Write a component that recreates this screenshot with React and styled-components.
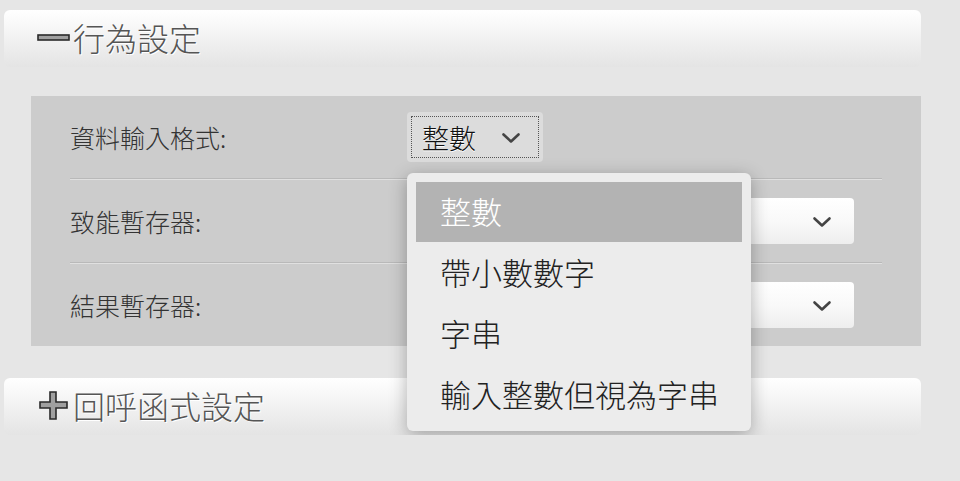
import { useState } from "react";
import styled, { createGlobalStyle } from "styled-components";

const options = ["整數", "帶小數數字", "字串", "輸入整數但視為字串"];

const GlobalStyle = createGlobalStyle`
  html, body {
    margin: 0;
    padding: 0;
    background: #e6e6e6;
    font-family: "Noto Sans CJK TC", "Noto Sans", sans-serif;
    font-weight: 300;
  }
`;

const Chevron = () => (
    <svg width="20" height="12" viewBox="0 0 20 12">
        <path d="M2.5 2.5 L10 9.5 L17.5 2.5" fill="none" stroke="#444" strokeWidth="2.6" strokeLinecap="round" strokeLinejoin="round" />
    </svg>
);

const MinusIcon = () => (
    <svg width="34" height="10" viewBox="0 0 34 10">
        <rect x="1" y="2" width="31" height="5" fill="#a0a0a0" stroke="#2a2a2a" strokeWidth="1.6" />
    </svg>
);

const PlusIcon = () => (
    <svg width="34" height="34" viewBox="0 0 34 34">
        <path d="M13 3 H19 V13 H30 V19 H19 V30 H13 V19 H3 V13 H13 Z" fill="#a0a0a0" stroke="#2a2a2a" strokeWidth="1.6" />
    </svg>
);

const Select = ({ value, width, open, focused, onToggle, onPick }) => (
    <SelectWrap>
        <SelectBox $width={width} $focused={focused} onClick={onToggle}>
            <span>{value}</span>
            <Chevron />
        </SelectBox>
        {open && (
            <Menu>
                {options.map((opt) => (
                    <MenuItem key={opt} $active={opt === value} onClick={() => onPick(opt)}>{opt}</MenuItem>
                ))}
            </Menu>
        )}
    </SelectWrap>
);

const App = () => {
    const [format, setFormat] = useState(options[0]);
    const [open, setOpen] = useState(true);

    return (
        <Page>
            <GlobalStyle />
            <SectionHeader>
                <MinusIcon />
                <span>行為設定</span>
            </SectionHeader>
            <Panel>
                <Row>
                    <Label>資料輸入格式:</Label>
                    <Select value={format} width={136} focused open={open}
                        onToggle={() => setOpen(!open)}
                        onPick={(v) => { setFormat(v); setOpen(false); }} />
                </Row>
                <Divider />
                <Row>
                    <Label>致能暫存器:</Label>
                    <Select value="" width={447} />
                </Row>
                <Divider />
                <Row>
                    <Label>結果暫存器:</Label>
                    <Select value="" width={447} />
                </Row>
            </Panel>
            <SectionHeader $closed>
                <PlusIcon />
                <span>回呼函式設定</span>
            </SectionHeader>
        </Page>
    );
};

export default App;

const Page = styled.div`
    width: 917px;
    padding: 10px 0 0 4px;
    display: flex;
    flex-direction: column;
`;

const SectionHeader = styled.div`
    box-sizing: border-box;
    height: 57px;
    margin-top: ${(p) => (p.$closed ? "32px" : "0")};
    border-radius: 6px;
    background: linear-gradient(to bottom, #ffffff 0%, #f3f3f3 45%, #e4e4e4 100%);
    display: flex;
    align-items: center;
    padding: 0 0 4px 33px;
    gap: 2px;
    font-size: 32px;
    color: #555;
    text-shadow: 1px 1px 0 #fff;

    svg {
        flex-shrink: 0;
        margin-top: 3px;
    }
`;

const Panel = styled.div`
    margin: 29px 0 0 27px;
    background: #cccccc;
    padding: 0 39px;
    display: flex;
    flex-direction: column;
`;

const Row = styled.div`
    height: 82px;
    display: flex;
    align-items: center;
`;

const Divider = styled.div`
    height: 2px;
    border-top: 1px solid #b9b9b9;
    border-bottom: 1px solid #e0e0e0;
    box-sizing: border-box;
`;

const Label = styled.div`
    width: 337px;
    font-size: 25px;
    color: #333;
`;

const SelectWrap = styled.div`
    position: relative;
`;

const SelectBox = styled.div`
    box-sizing: border-box;
    width: ${(p) => p.$width}px;
    height: ${(p) => (p.$focused ? "50px" : "46px")};
    border-radius: 4px;
    background: ${(p) => (p.$focused ? "#dcdcdc" : "linear-gradient(to bottom, #ffffff 0%, #f9f9f9 50%, #eeeeee 100%)")};
    display: flex;
    align-items: center;
    justify-content: space-between;
    padding: 0 22px 0 15px;
    font-size: 27px;
    color: #111;
    text-shadow: 0 1px 0 #fff;
    cursor: pointer;
    outline: ${(p) => (p.$focused ? "1px dotted #555" : "none")};
    outline-offset: -5px;

    svg {
        margin-top: 2px;
    }
`;

const Menu = styled.div`
    position: absolute;
    top: 61px;
    left: 0;
    width: 344px;
    box-sizing: border-box;
    padding: 9px 9px 6px;
    background: #ececec;
    border-radius: 6px;
    box-shadow: 0 4px 18px rgba(0, 0, 0, 0.3);
    z-index: 10;
    display: flex;
    flex-direction: column;
    gap: 1px;
`;

const MenuItem = styled.div`
    box-sizing: border-box;
    height: 60px;
    display: flex;
    align-items: center;
    padding: 0 0 4px 24px;
    font-size: 31px;
    line-height: 1;
    color: ${(p) => (p.$active ? "#fff" : "#222")};
    background: ${(p) => (p.$active ? "#b3b3b3" : "transparent")};
    cursor: pointer;
`;
